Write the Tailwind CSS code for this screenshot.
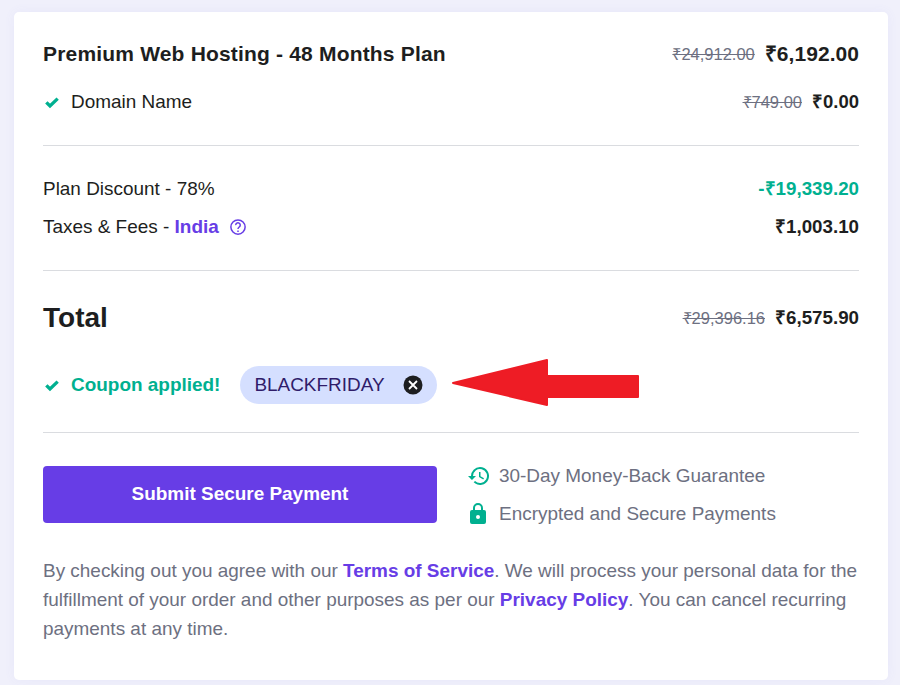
<!DOCTYPE html>
<html lang="en">
  <head>
    <meta charset="UTF-8" />
    <meta name="viewport" content="width=device-width, initial-scale=1.0" />
    <script src="https://cdn.jsdelivr.net/npm/@tailwindcss/browser@4"></script>
    <title>Checkout</title>
  </head>
  <body class="h-[685px] overflow-hidden bg-[#f0f0fb] font-['Liberation_Sans',Arial,sans-serif] text-[#1d1e20]">
    <div class="relative ml-[14px] mt-[12px] w-[874px] h-[668px] bg-white rounded-[5px] px-[29px] pt-[28px] shadow-[0_0_12px_rgba(100,100,220,0.06)]">
      <!-- order lines -->
      <div class="flex items-center justify-between h-[28px]">
        <span class="text-[21px] font-bold tracking-[0.18px]">Premium Web Hosting - 48 Months Plan</span>
        <span class="flex items-center gap-[10px]">
          <s class="text-[16.5px] text-[#6d7081]">₹24,912.00</s>
          <b class="text-[21px] tracking-[0.05px]">₹6,192.00</b>
        </span>
      </div>
      <div class="flex items-center justify-between h-[24px] mt-[22px]">
        <span class="flex items-center text-[18.95px]">
          <svg class="w-[16px] h-[16px] mr-[11px] ml-[1px] text-[#00b090]" viewBox="0 0 24 24" fill="none" stroke="currentColor" stroke-width="5"><path d="M3.5 12.5l5.5 5.5L20.5 7" /></svg>
          Domain Name
        </span>
        <span class="flex items-center gap-[10px]">
          <s class="text-[16.5px] text-[#6d7081]">₹749.00</s>
          <b class="text-[18.5px]">₹0.00</b>
        </span>
      </div>
      <hr class="mt-[31px] border-[#dadce0]" />

      <div class="flex items-center justify-between h-[24px] mt-[31px] text-[18.95px]">
        <span>Plan Discount - 78%</span>
        <b class="text-[18.75px] text-[#00b090]">-₹19,339.20</b>
      </div>
      <div class="flex items-center justify-between h-[24px] mt-[14px] text-[18.95px]">
        <span class="flex items-center">
          Taxes &amp; Fees -&nbsp;<b class="text-[#673de6]">India</b>
          <svg class="w-[18px] h-[18px] ml-[10px] text-[#673de6]" viewBox="0 0 24 24" fill="none" stroke="currentColor" stroke-width="2"><circle cx="12" cy="12" r="9.5" /><path d="M9 9.5a3 3 0 1 1 4.6 2.5c-1 .7-1.6 1.3-1.6 2.5" /><path d="M12 16.5v2" /></svg>
        </span>
        <b class="text-[18.75px]">₹1,003.10</b>
      </div>
      <hr class="mt-[31px] border-[#dadce0]" />

      <div class="flex items-center justify-between h-[36px] mt-[29px]">
        <b class="text-[28px]">Total</b>
        <span class="flex items-center gap-[10px]">
          <s class="text-[16.5px] text-[#6d7081]">₹29,396.16</s>
          <b class="text-[18.75px]">₹6,575.90</b>
        </span>
      </div>

      <!-- coupon -->
      <div class="flex items-center h-[38px] mt-[30px]">
        <svg class="w-[16px] h-[16px] mr-[11px] ml-[1px] text-[#00b090]" viewBox="0 0 24 24" fill="none" stroke="currentColor" stroke-width="5"><path d="M3.5 12.5l5.5 5.5L20.5 7" /></svg>
        <b class="text-[18.95px] text-[#00b090]">Coupon applied!</b>
        <span class="flex items-center justify-between w-[197px] h-[38px] ml-[20px] pl-[14px] pr-[14px] rounded-full bg-[#d5dfff] text-[18.95px] text-[#2f1c6a]">
          BLACKFRIDAY
          <svg class="w-[20px] h-[20px]" viewBox="0 0 20 20"><circle cx="10" cy="10" r="9.5" fill="#1d1e20" /><path d="M6 6l8 8M14 6l-8 8" stroke="#fff" stroke-width="1.8" /></svg>
        </span>
      </div>
      <svg class="absolute left-[437px] top-[346px] w-[192px] h-[50px]" viewBox="0 0 192 50"><path d="M2 25L96 2v16h91v21H96v8z" fill="#ee1c25" stroke="#ee1c25" stroke-linejoin="round" stroke-width="2" /></svg>
      <hr class="mt-[28px] border-[#dadce0]" />

      <!-- payment -->
      <div class="flex mt-[33px]">
        <button class="w-[394px] h-[57px] bg-[#673de6] text-white font-bold text-[18.95px] rounded-[4px]">Submit Secure Payment</button>
        <div class="ml-[30px] -mt-[2px] flex flex-col gap-[14px] text-[18.95px] text-[#6d7081]">
          <div class="flex items-center h-[24px]">
            <svg class="w-[24px] h-[24px] mr-[8px] text-[#00b090] shrink-0" viewBox="0 0 24 24" fill="currentColor"><path d="M13 3a9 9 0 0 0-9 9H1l3.9 3.9.1.1L9 12H6a7 7 0 1 1 2.05 4.95L6.64 18.36A9 9 0 1 0 13 3zm-1 5v5l4.25 2.52.77-1.28-3.52-2.09V8z" /></svg>
            30-Day Money-Back Guarantee
          </div>
          <div class="flex items-center h-[24px]">
            <svg class="w-[24px] h-[24px] mr-[8px] text-[#00b090] shrink-0 -translate-x-[1px]" viewBox="0 0 24 24" fill="currentColor"><path d="M18 8h-1V6A5 5 0 0 0 7 6v2H6a2 2 0 0 0-2 2v10a2 2 0 0 0 2 2h12a2 2 0 0 0 2-2V10a2 2 0 0 0-2-2zM9 6a3 3 0 0 1 6 0v2H9zm3 11a2 2 0 1 1 0-4 2 2 0 0 1 0 4z" /></svg>
            Encrypted and Secure Payments
          </div>
        </div>
      </div>

      <p class="mt-[30px] -mr-[3px] text-[18.95px] leading-[29px] text-[#6d7081]">
        By checking out you agree with our <b class="text-[#673de6]">Terms of Service</b>. We will process your personal data for the fulfillment of your order and other purposes as per our <b class="text-[#673de6]">Privacy Policy</b>. You can cancel recurring payments at any time.
      </p>
    </div>
  </body>
</html>
